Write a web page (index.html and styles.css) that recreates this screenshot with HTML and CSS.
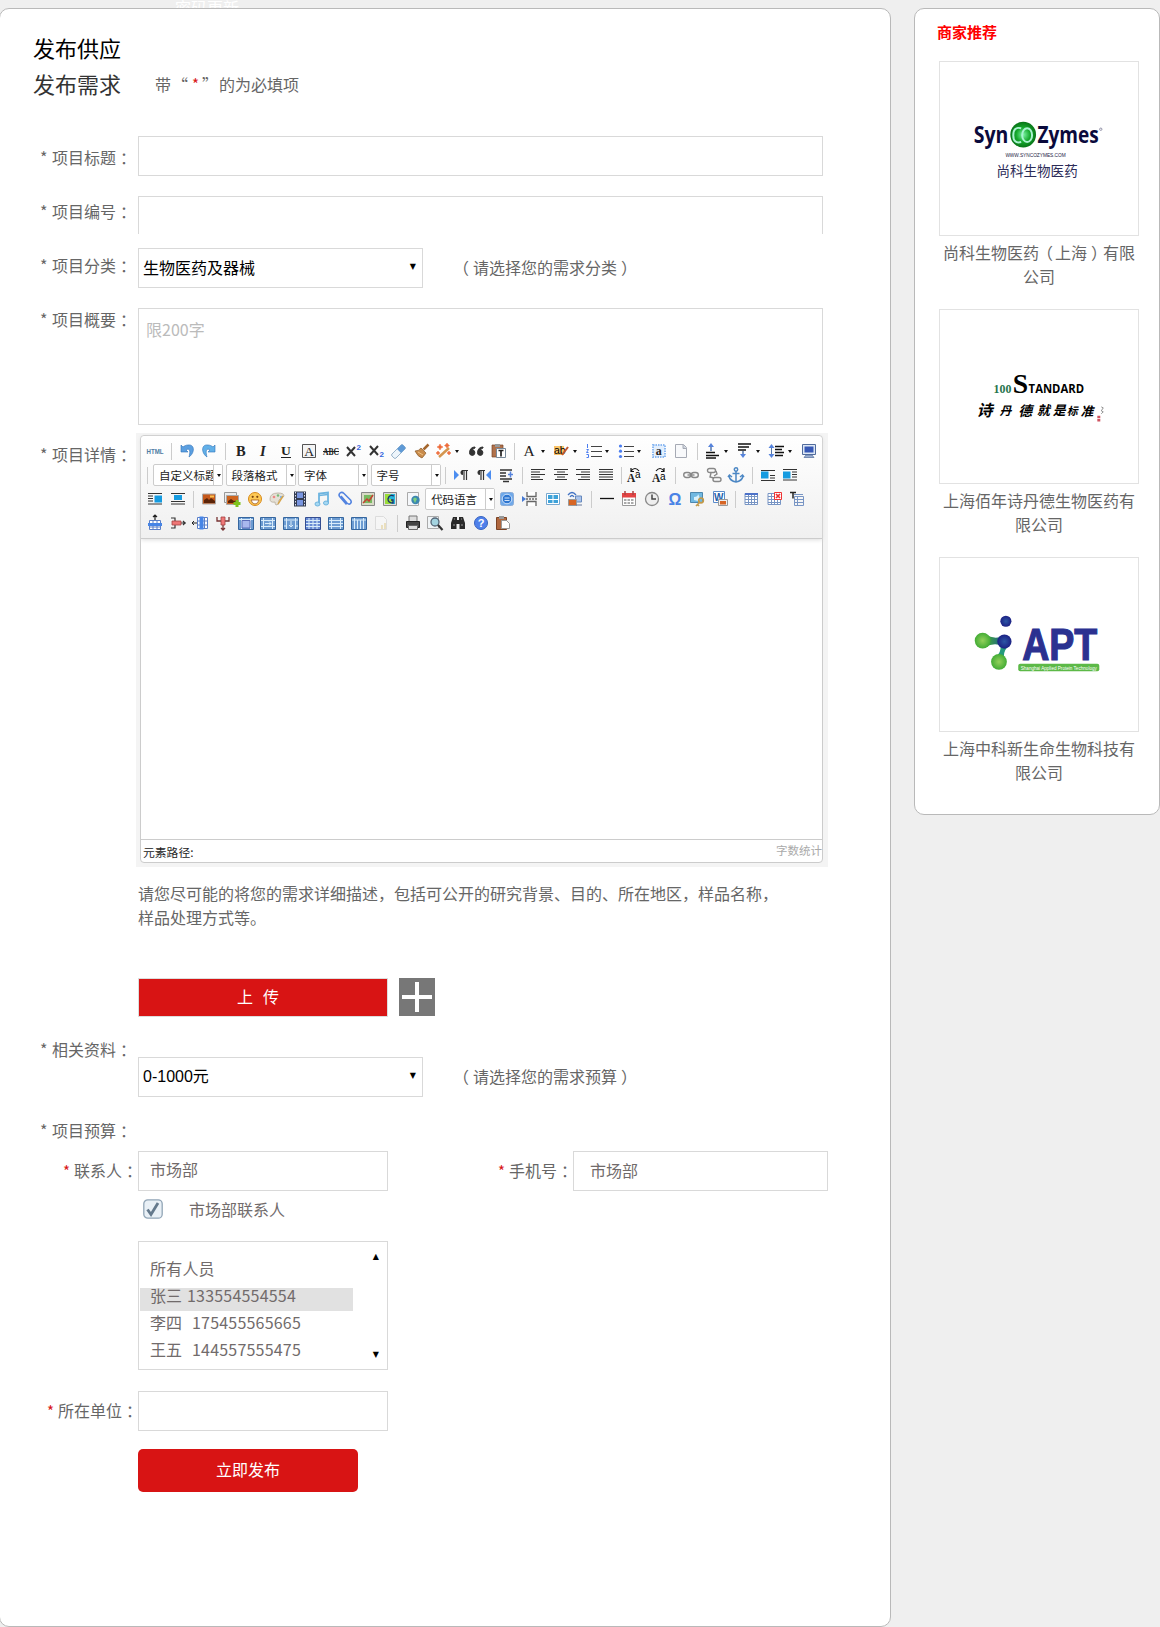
FILE: index.html
```html
<!DOCTYPE html>
<html lang="zh-CN">
<head>
<meta charset="utf-8">
<title>发布需求</title>
<link rel="stylesheet" href="styles.css">
</head>
<body>
<div class="topbar">密码更新</div>
<div class="page">
<main class="panel main">
  <h1 class="title title-supply">发布供应</h1>
  <div class="title-row">
    <h1 class="title">发布需求</h1>
    <p class="required-note">带<span class="quote-l">“</span><b class="star">*</b><span class="quote-r">”</span>的为必填项</p>
  </div>

  <div class="form">
    <div class="labels">
      <label><i>*</i>项目标题<s>：</s></label>
      <label><i>*</i>项目编号<s>：</s></label>
      <label><i>*</i>项目分类<s>：</s></label>
      <label><i>*</i>项目概要<s>：</s></label>
      <label class="l-detail"><i>*</i>项目详情<s>：</s></label>
      <label class="l-files"><i>*</i>相关资料<s>：</s></label>
      <label class="l-budget"><i>*</i>项目预算<s>：</s></label>
    </div>
    <div class="fields">
      <div class="box"></div>
      <div class="box box-open"></div>
      <div class="select-row"><div class="box select">生物医药及器械<span class="down">▼</span></div><span class="hint"><s class="open">（</s>请选择您的需求分类<s>）</s></span></div>
      <div class="box summary">限200字</div>

      <div class="editor">
        <div class="editor-frame">
          <div class="toolbar">
            <div class="tools">
              <span class="tool"><svg viewBox="0 0 16 16"><text x="-.5" y="10.5" font-size="6.5" font-weight="700" fill="#4d7ba3" textLength="17" lengthAdjust="spacingAndGlyphs">HTML</text></svg></span>
              <span class="sep"></span>
              <span class="tool"><svg viewBox="0 0 16 16"><path d="M2 2v7h7L7 7c3-2 5 0 3 7 6-4 6-13-1-12-2 0-4 1-5 2z" fill="#5b9fe0" stroke="#2f72b8" stroke-width=".6"/></svg></span>
              <span class="tool"><svg viewBox="0 0 16 16"><path d="M14 2v7H7l2-2C6 5 4 7 6 14 0 10 0 1 7 2c2 0 4 1 5 2z" fill="#62b0e8" stroke="#2f72b8" stroke-width=".6"/></svg></span>
              <span class="sep"></span>
              <span class="tool"><svg viewBox="0 0 16 16"><text class="serif" x="3" y="13" font-size="14.5" font-weight="700">B</text></svg></span>
              <span class="tool"><svg viewBox="0 0 16 16"><text class="serif" x="4" y="13" font-size="14.5" font-weight="700" font-style="italic">I</text></svg></span>
              <span class="tool"><svg viewBox="0 0 16 16"><text class="serif" x="3" y="12" font-size="13.5" font-weight="700">U</text><path d="M3 14.5h10" stroke="#222"/></svg></span>
              <span class="tool"><svg viewBox="0 0 16 16"><path d="M1.500 1.500h13v13h-13z" fill="#f4f4f4" stroke="#555"/><text class="serif" x="3.200" y="13" font-size="13.500">A</text></svg></span>
              <span class="tool"><svg viewBox="0 0 16 16"><text class="serif" x="0" y="12" font-size="10" font-weight="700" textLength="16" lengthAdjust="spacingAndGlyphs">ABC</text><path d="M0 8.500h16" stroke="#222"/></svg></span>
              <span class="tool"><svg viewBox="0 0 16 16"><path d="M1 4l8 9M9 4l-8 9" stroke="#333" stroke-width="2"/><text x="10.500" y="6.500" font-size="8" font-weight="700" fill="#36d">2</text></svg></span>
              <span class="tool"><svg viewBox="0 0 16 16"><path d="M1 3l8 9M9 3l-8 9" stroke="#333" stroke-width="2"/><text x="10.500" y="14" font-size="8" font-weight="700" fill="#36d">2</text></svg></span>
              <span class="tool"><svg viewBox="0 0 16 16"><path d="M1 11l9-9q1-1 2 0l2 2q1 1 0 2l-9 9q-1 1-2 0l-2-2q-1-1 0-2z" fill="#eef5fb" stroke="#83a2bd" stroke-width=".8"/><path d="M6 6l4-4q1-1 2 0l2 2q1 1 0 2l-4 4z" fill="#5f9ad6"/></svg></span>
              <span class="tool"><svg viewBox="0 0 16 16"><path d="M14.500 1.500l-5 5" stroke="#a5672e" stroke-width="2.500"/><path d="M1 8q4 0 6-3l5 5q-2 3-4 5-4-1-7-7z" fill="#c98b4b" stroke="#8a5a2a" stroke-width=".7"/><path d="M4 9l5 3" stroke="#f0c384"/></svg></span>
              <span class="tool more"><svg viewBox="0 0 16 16"><path d="M3 14l10-9" stroke="#d4964f" stroke-width="2.500"/><path d="M4 1l1 2 2 1-2 1-1 2-1-2-2-1 2-1zM11 0l1 1.500 1.500 1L12 3.500 11 5l-1-1.500-1.500-1 1.500-1zM2 8l.8 1.200L4 10l-1.200.8L2 12l-.8-1.200L0 10l1.200-.8zM13 8l.8 1.200L15 10l-1.200.8L13 12l-.8-1.200L11 10l1.200-.8z" fill="#ee6a38" stroke="#ee6a38" stroke-width=".5"/></svg></span>
              <span class="tool"><svg viewBox="0 0 16 16"><path d="M7 4q-5 0-5.500 5.500A2.700 2.700 0 1 0 4.500 7Q5 5.500 7 5zM15 4q-5 0-5.500 5.500A2.700 2.700 0 1 0 12.500 7Q13 5.500 15 5z" fill="#333" stroke="#333"/></svg></span>
              <span class="tool"><svg viewBox="0 0 16 16"><path d="M1 2h11v12H1z" fill="#b0714b" stroke="#754628" stroke-width=".7"/><path d="M4 1h5v3H4z" fill="#999"/><path d="M5.500 5.500h9v9h-9z" fill="#fff" stroke="#789"/><path d="M7.500 7.500h5M10 7.500v6" stroke="#222" stroke-width="1.700"/></svg></span>
              <span class="sep"></span>
              <span class="tool more"><svg viewBox="0 0 16 16"><text class="serif" x="1.500" y="12.500" font-size="15.500">A</text></svg></span>
              <span class="tool more"><svg viewBox="0 0 16 16"><path d="M0 3h10v9H0z" fill="#f9c368"/><text x="0" y="11" font-size="10.500">ab</text><path d="M8 12l6-8" stroke="#c1562e" stroke-width="2"/></svg></span>
              <span class="tool more"><svg viewBox="0 0 16 16"><path d="M5 3.500h11M5 8.500h11M5 13.500h11" stroke="#444"/><path d="M1.500 1v4M.500 6.500h2l-2 3h2M.500 11.500h2v3h-2" fill="none" stroke="#4b7df0"/></svg></span>
              <span class="tool more"><svg viewBox="0 0 16 16"><path d="M6 3.500h10M6 8.500h10M6 13.500h10" stroke="#444"/><g fill="#4b7df0"><circle cx="2.500" cy="3" r="1.600"/><circle cx="2.500" cy="8.200" r="1.600"/><circle cx="2.500" cy="13.500" r="1.600"/></g></svg></span>
              <span class="tool"><svg viewBox="0 0 16 16"><path d="M2 2h12v12H2z" fill="#e3effd" stroke="#8cb9f2" stroke-width="2" stroke-dasharray="1.500 1"/><text class="serif" x="4.800" y="11.500" font-size="12" font-weight="700">a</text></svg></span>
              <span class="tool"><svg viewBox="0 0 16 16"><path d="M2.500 1.500h8l3 3v10h-11z" fill="#f8f9fb" stroke="#a6aab4"/><path d="M10 1.500v4h3.500" fill="#ccd2dd" stroke="#a6aab4"/></svg></span>
              <span class="sep"></span>
              <span class="tool more"><svg viewBox="0 0 16 16"><path d="M1 9.500h9M1 12.500h13M1 15h10" stroke="#111" stroke-width="1.400"/><path d="M6 8V3" stroke="#57a" stroke-width="1.500"/><path d="M3 4l3-4 3 4z" fill="#5683dc"/></svg></span>
              <span class="tool more"><svg viewBox="0 0 16 16"><path d="M1 1h13M1 4h11M1 7h8" stroke="#111" stroke-width="1.400"/><path d="M6 8v4" stroke="#57a" stroke-width="1.500"/><path d="M3 11l3 4 3-4z" fill="#5683dc"/></svg></span>
              <span class="tool more"><svg viewBox="0 0 16 16"><path d="M6 3.500h9M6 6.500h7M6 9.500h9M6 12.500h8" stroke="#111" stroke-width="1.400"/><path d="M2.500 3v10" stroke="#57a"/><path d="M-.500 5l3-4 3 4zM-.500 11l3 4 3-4z" fill="#5683dc"/></svg></span>
              <span class="tool"><svg viewBox="0 0 16 16"><path d="M1.500 1.500h13v10h-13z" fill="#dde7f5" stroke="#506b9c"/><path d="M3.500 3.500h9v6h-9z" fill="#3658b5"/><path d="M5 12h6l2 2.500H3z" fill="#9cb0d1" stroke="#506b9c" stroke-width=".7"/></svg></span>
            </div>

            <div class="tools">
              <span class="sep lead"></span>
              <span class="combo">自定义标题</span><span class="combo">段落格式</span><span class="combo">字体</span><span class="combo">字号</span>
              <span class="sep gap"></span>
              <span class="tool"><svg viewBox="0 0 16 16"><path d="M1 3v10l5-5z" fill="#4c8df0"/><path d="M11 3v10M13.500 3v10M9 3.500h6" stroke="#333" stroke-width="1.200"/><path d="M10 3a2.500 2.500 0 0 0 0 5z" fill="#333"/></svg></span>
              <span class="tool"><svg viewBox="0 0 16 16"><path d="M15 3v10l-5-5z" fill="#4c8df0"/><path d="M5 3v10M7.500 3v10M3 3.500h6" stroke="#333" stroke-width="1.200"/><path d="M4 3a2.500 2.500 0 0 0 0 5z" fill="#333"/></svg></span>
              <span class="tool"><svg viewBox="0 0 16 16"><path d="M2 3h12M2 6h6M2 9h6M2 12h12M5 14.500h6" stroke="#333" stroke-width="1.300"/><path d="M12.500 4.500v6M10 7.500h5" stroke="#5683dc" stroke-width="1.500"/></svg></span>
              <span class="sep"></span>
              <span class="tool"><svg viewBox="0 0 16 16"><path d="M1 2.500h14M1 5h9M1 7.500h14M1 10h9M1 12.500h12" stroke="#333"/></svg></span>
              <span class="tool"><svg viewBox="0 0 16 16"><path d="M1 2.500h14M4 5h8M1 7.500h14M4 10h8M2 12.500h12" stroke="#333"/></svg></span>
              <span class="tool"><svg viewBox="0 0 16 16"><path d="M1 2.500h14M6 5h9M1 7.500h14M6 10h9M3 12.500h12" stroke="#333"/></svg></span>
              <span class="tool"><svg viewBox="0 0 16 16"><path d="M1 2.500h14M1 5h14M1 7.500h14M1 10h14M1 12.500h14" stroke="#333"/></svg></span>
              <span class="sep"></span>
              <span class="tool case-up"><svg viewBox="0 0 16 16"><text class="serif" x="0" y="14.500" font-size="11.500" font-weight="700">A</text><text x="8" y="11" font-size="10">a</text><path d="M4 4q4-5 8 0M4 1v3.500h3" fill="none" stroke="#111" stroke-width="1.200"/></svg></span>
              <span class="tool case-down"><svg viewBox="0 0 16 16"><text class="serif" x="0" y="14.500" font-size="11.500" font-weight="700">A</text><text x="8" y="13" font-size="10">a</text><path d="M4 4q4-5 8 0M12 1v3.500H9" fill="none" stroke="#111" stroke-width="1.200"/></svg></span>
              <span class="sep after-case"></span>
              <span class="tool"><svg viewBox="0 0 16 16"><g fill="none" stroke="#888" stroke-width="1.400"><rect x=".7" y="5.500" width="7" height="5" rx="2.500"/><rect x="8.300" y="5.500" width="7" height="5" rx="2.500"/><path d="M4.500 8h7"/></g></svg></span>
              <span class="tool"><svg viewBox="0 0 16 16"><g fill="none" stroke="#888" stroke-width="1.400"><rect x="1.500" y="1.500" width="8" height="4" rx="2"/><rect x="7" y="10.500" width="8" height="4" rx="2"/><path d="M5 6l-1 4 4 1M10 4l1 3-3 2"/></g></svg></span>
              <span class="tool"><svg viewBox="0 0 16 16"><g fill="none" stroke="#4c87c4" stroke-width="1.500"><circle cx="8" cy="2.500" r="1.700"/><path d="M8 4v11M4.500 6.500h7M1 9q1 5 7 6 6-1 7-6M0 10l1.500-2L4 10M12 10l2.500-2L16 10"/></g></svg></span>
              <span class="sep"></span>
              <span class="tool"><svg viewBox="0 0 16 16"><path d="M1 3.500h14M10 8.500h5M10 11h5M1 13.500h14" stroke="#333"/><path d="M1 4.500h7.500v7H1z" fill="#159be0"/></svg></span>
              <span class="tool"><svg viewBox="0 0 16 16"><path d="M1 2.500h14M10 5h5M10 7.500h5M10 10h5M1 13h14" stroke="#333"/><path d="M1 4.500h7.500v7H1z" fill="#159be0"/></svg></span>
            </div>

            <div class="tools">
              <span class="tool"><svg viewBox="0 0 16 16"><path d="M1 2.500h14M1 5h5M1 7.500h5M1 10h5M1 13h14" stroke="#333"/><path d="M7.500 4.500H15v7H7.500z" fill="#159be0"/></svg></span>
              <span class="tool"><svg viewBox="0 0 16 16"><path d="M1 2.500h14M1 13h14M1 10.500h14" stroke="#333"/><path d="M4 4h8v5H4z" fill="#159be0"/></svg></span>
              <span class="sep"></span>
              <span class="tool"><svg viewBox="0 0 16 16"><path d="M1.500 3h13v10h-13z" fill="#c5581b" stroke="#aaa"/><path d="M3 9l3-2 2 2 2-2 4 3v2H3z" fill="#5b2408"/><path d="M9 4.500h4v2H9z" fill="#fbc14e"/></svg></span>
              <span class="tool"><svg viewBox="0 0 16 16"><path d="M.500 1.500h12v10h-12z" fill="#eee" stroke="#999"/><path d="M2.500 4.500h12v9h-12z" fill="#cf651f" stroke="#aaa"/><path d="M4 10l3-2 3 2 3-1v3H4z" fill="#5b2408"/><path d="M13 9v7M9.500 12.500h7" stroke="#7ec21c" stroke-width="3"/></svg></span>
              <span class="tool"><svg viewBox="0 0 16 16"><circle cx="8" cy="8" r="6.500" fill="#fdc955" stroke="#d98a1a"/><path d="M4 9h8q-1 4-4 4T4 9z" fill="#fff" stroke="#a3591a" stroke-width=".8"/><circle cx="5.700" cy="5.800" r="1.100" fill="#7b430f"/><circle cx="10.300" cy="5.800" r="1.100" fill="#7b430f"/></svg></span>
              <span class="tool"><svg viewBox="0 0 16 16"><path d="M1 8q0-6 8-6 6 0 6 3-1 2-4 3-2 1-1 3 0 3-3 3-1-1-1-3-5 1-5-3z" fill="#e5e0d5" stroke="#b5ab99" stroke-width=".8"/><circle cx="5" cy="6" r="1.300" fill="#e88"/><circle cx="9" cy="4.500" r="1.200" fill="#7b7"/><circle cx="12" cy="6" r="1" fill="#6ae"/><path d="M14 5l-5 8" stroke="#d6a44a" stroke-width="1.500"/></svg></span>
              <span class="tool"><svg viewBox="0 0 16 16"><path d="M2 .500h12v15H2z" fill="#333c52"/><path d="M5 1.500h6v5.500H5zM5 9h6v5.500H5z" fill="#7895e0"/><path d="M3.500 1v14M12.500 1v14" stroke="#dde" stroke-dasharray="1.500 1.500"/></svg></span>
              <span class="tool"><svg viewBox="0 0 16 16"><path d="M5 13V2.500l9-1V12" fill="none" stroke="#6db4df" stroke-width="1.800"/><path d="M5 4.500l9-1" stroke="#6db4df" stroke-width="1.500"/><ellipse cx="3.500" cy="13" rx="2.500" ry="2" fill="#a6d8f2" stroke="#6db4df"/><ellipse cx="12" cy="12" rx="2.500" ry="2" fill="#a6d8f2" stroke="#6db4df"/></svg></span>
              <span class="tool"><svg viewBox="0 0 16 16"><path d="M4 5l6 7q2 2 3.500.500 1.500-1.500 0-3.500L7 2.500Q5 .500 3 2 1 4 3 6l6.500 7.500" fill="none" stroke="#5283e0" stroke-width="1.500"/></svg></span>
              <span class="tool"><svg viewBox="0 0 16 16"><path d="M1.500 1.500h13v13h-13z" fill="#d8dbc6" stroke="#888"/><path d="M4 4h8v8H4z" fill="#78ba61"/><path d="M3 12l4-4 2 2 4-6" fill="none" stroke="#c53f30" stroke-width="1.500"/></svg></span>
              <span class="tool"><svg viewBox="0 0 16 16"><path d="M1.500 1.500h13v13h-13z" fill="#ddd" stroke="#888"/><path d="M3 3h10v10H3z" fill="#26b6dc"/><path d="M3 3h6L6 7l5 2-2 4H3z" fill="#9add38"/><path d="M12 5q-5-2-6 3 0 4 5 4V9H9" fill="none" stroke="#236" stroke-width="1.300"/></svg></span>
              <span class="tool"><svg viewBox="0 0 16 16"><path d="M2.500 1.500h11v13h-11z" fill="#f5f7fa" stroke="#aaa"/><circle cx="10.500" cy="9" r="4.200" fill="#3c87b0"/><path d="M8 8q2-3 4 0l-2 4z" fill="#7bd080"/></svg></span>
              <span class="combo code">代码语言</span>
              <span class="tool"><svg viewBox="0 0 16 16"><rect x="1.500" y="1.500" width="13" height="13" rx="2" fill="#6fa9ea" stroke="#8bacd7"/><circle cx="8" cy="8" r="4.800" fill="#2e76d0" stroke="#cfe2fa"/><path d="M5.500 7h5M5.500 9.500h5" stroke="#cfe2fa"/></svg></span>
              <span class="tool"><svg viewBox="0 0 16 16"><path d="M5 1v4.500h9V1M5 15v-4.500h9V15" fill="#fff" stroke="#666" stroke-width="1.300"/><path d="M4 8h11" stroke="#222" stroke-dasharray="2 1"/><path d="M0 5l4 3-4 3z" fill="#467ad4"/></svg></span>
              <span class="tool"><svg viewBox="0 0 16 16"><path d="M1.500 2.500h13v11h-13z" fill="#fff" stroke="#78a8cf"/><path d="M3 4h4.500v4H3zM8.500 4H13v4H8.500zM3 9h4.500v3H3zM8.500 9H13v3H8.500z" fill="#3da2d9"/></svg></span>
              <span class="tool"><svg viewBox="0 0 16 16"><path d="M1 4q4-5 8 0M3 6q2-3 4 0" fill="none" stroke="#4273c4" stroke-width="1.300"/><path d="M8.500 5h6v6h-6z" fill="#abc5ed" stroke="#6789bd"/><path d="M1.500 8.500h8v6h-8z" fill="#d76524" stroke="#999"/><path d="M9 14h6" stroke="#679"/></svg></span>
              <span class="sep"></span>
              <span class="tool"><svg viewBox="0 0 16 16"><path d="M1 7.500h14" stroke="#111" stroke-width="1.300"/></svg></span>
              <span class="tool"><svg viewBox="0 0 16 16"><path d="M1.500 2.500h13v12h-13z" fill="#fff" stroke="#9a9a9a"/><path d="M1 2h14v4.500H1z" fill="#e34444"/><path d="M4 0v4M12 0v4" stroke="#a44" stroke-width="1.500"/><path d="M3 9h10M3 12h10" stroke="#aaa" stroke-width="2" stroke-dasharray="2.500 1"/></svg></span>
              <span class="tool"><svg viewBox="0 0 16 16"><circle cx="8" cy="8" r="6.500" fill="#eee" stroke="#888" stroke-width="1.300"/><path d="M8 3.500V8h4" fill="none" stroke="#444" stroke-width="1.500"/></svg></span>
              <span class="tool"><svg viewBox="0 0 16 16"><text x="1.500" y="13.500" font-size="16" font-weight="700" fill="#4a83e6">Ω</text></svg></span>
              <span class="tool"><svg viewBox="0 0 16 16"><path d="M1.500 1.500h12v10h-12z" fill="#70b8e1" stroke="#4e88ae"/><path d="M5 9V6q4 0 4-3 3 4 0 7z" fill="#d8f0fb"/><circle cx="12" cy="9.500" r="2.300" fill="none" stroke="#c39a4a" stroke-width="1.700"/><path d="M11 11l-4 4M8 13l2 2" stroke="#c39a4a" stroke-width="1.700"/></svg></span>
              <span class="tool"><svg viewBox="0 0 16 16"><path d="M1.500.500h11v11h-11z" fill="#fff" stroke="#5b8ccb"/><text x="2" y="9.500" font-size="10" font-weight="700" fill="#235dab">W</text><path d="M6.500 8.500h9v6h-9z" fill="#eee" stroke="#999"/><path d="M8 10h6v3.500H8z" fill="#d76524"/></svg></span>
              <span class="sep"></span>
              <span class="tool"><svg viewBox="0 0 16 16"><path d="M2 2.500h12.500v11H2z" fill="#fff" stroke="#7895c4"/><path d="M2 5.500h12.500M2 8.500h12.500M2 11.500h12.500M5.500 3v10M8.500 3v10M11.500 3v10" stroke="#7895c4"/><path d="M2 2h13v2H2z" fill="#4d72c9"/></svg></span>
              <span class="tool"><svg viewBox="0 0 16 16"><path d="M2 2.500h12.500v11H2z" fill="#fff" stroke="#7895c4"/><path d="M2 5.500h12.500M2 8.500h12.500M2 11.500h12.500M5.500 3v10M8.500 3v10M11.500 3v10" stroke="#7895c4"/><path d="M8.500 1.500h7v7h-7z" fill="#fff" stroke="#e33"/><path d="M10 3l4 4M14 3l-4 4" stroke="#e33" stroke-width="1.700"/></svg></span>
              <span class="tool"><svg viewBox="0 0 16 16"><path d="M1 1.500h6M4 1.500v6" stroke="#222" stroke-width="1.500"/><path d="M5.500 5.500h9v9h-9zM5.500 8.500H15M5.500 11.500H15M8.500 5v9M5 3.500h9" fill="none" stroke="#7895c4"/></svg></span>
            </div>

            <div class="tools">
              <span class="tool"><svg viewBox="0 0 16 16"><path d="M2.500 5.500h11v9h-11zM2.500 12H14M6 5v9M10 5v9" fill="#fff" stroke="#5b7fc7"/><path d="M1 8h14v3H1z" fill="#4785e6"/><path d="M8 0v5M6 2l2-2 2 2" fill="none" stroke="#222" stroke-width="1.200"/></svg></span>
              <span class="tool"><svg viewBox="0 0 16 16"><path d="M1 3h4v3M1 13h4v-3M10 8h6M13 6l2 2-2 2" fill="none" stroke="#333" stroke-width="1.200"/><path d="M2 6h9v4H2z" fill="#ef7777" stroke="#a34343" stroke-width=".8"/></svg></span>
              <span class="tool"><svg viewBox="0 0 16 16"><path d="M5.500 2.500h10v11h-10zM5.500 6H16M5.500 10H16M12.500 2v11" fill="#fff" stroke="#5b7fc7"/><path d="M7.500 1.500h4v13h-4z" fill="#4785e6"/><path d="M0 8h5M2 6L0 8l2 2" fill="none" stroke="#222"/></svg></span>
              <span class="tool"><svg viewBox="0 0 16 16"><path d="M2 2v4h4M14 2v4h-4M8 9v6M6 13l2 2 2-2" fill="none" stroke="#733" stroke-width="1.300"/><path d="M6 2h4v8H6z" fill="#ef7777" stroke="#a34343" stroke-width=".8"/></svg></span>
              <span class="tool"><svg class="cells first" viewBox="0 0 16 16"><path d="M.500 2.500h15v12H.500z"/><path d="M1 4.500h14M3.500 3v11M12.500 3v11" class="grid"/><path d="M4 5.500h8v7.500H4z" class="light"/></svg></span>
              <span class="tool"><svg class="cells" viewBox="0 0 16 16"><path d="M.500 2.500h15v12H.500z"/><path d="M1 5.500h14M1 11.500h14M3.500 3v11M12.500 3v11" class="grid"/><path d="M5 8.500h6M9 6.500l2 2-2 2" class="grid"/></svg></span>
              <span class="tool"><svg class="cells" viewBox="0 0 16 16"><path d="M.500 2.500h15v12H.500z"/><path d="M1 5h14M3.500 3v11M12.500 3v11M1 11h3M12 11h3" class="grid"/><path d="M8 6v6M6 10l2 2 2-2" class="grid"/></svg></span>
              <span class="tool"><svg class="cells deep" viewBox="0 0 16 16"><path d="M.500 2.500h15v12H.500z"/><path d="M1 5.500h14M1 8.500h14M1 11.500h14M4 3v11M8 3v11M12 3v11" class="grid"/></svg></span>
              <span class="tool"><svg class="cells" viewBox="0 0 16 16"><path d="M.500 2.500h15v12H.500z"/><path d="M1 5.500h14M1 8.500h14M1 11.500h14M3.500 3v11M12.500 3v11" class="grid"/></svg></span>
              <span class="tool"><svg class="cells" viewBox="0 0 16 16"><path d="M.500 2.500h15v12H.500z"/><path d="M1 5h14M3.500 3v11M6.500 5v9M9.500 5v9M12.500 3v11" class="grid"/></svg></span>
              <span class="tool faded"><svg viewBox="0 0 16 16"><path d="M2.500 1.500h8l3 3v10h-11z" fill="#fff" stroke="#aaa"/><path d="M8 14v-4h2v4zM11 14V8h2v6z" fill="#d9b64a"/></svg></span>
              <span class="sep"></span>
              <span class="tool"><svg viewBox="0 0 16 16"><path d="M4 1h8v6H4z" fill="#ddd" stroke="#777"/><path d="M1.500 6.500h13v6h-13z" fill="#444" stroke="#222"/><path d="M3.500 10.500h9v4h-9z" fill="#ddd" stroke="#666"/></svg></span>
              <span class="tool"><svg viewBox="0 0 16 16"><path d="M.500 1.500h11v12H.500z" fill="#f0f4f6" stroke="#aaa"/><circle cx="8" cy="7" r="4" fill="#a4d4e0" stroke="#567" stroke-width="1.300"/><path d="M11 10l4.500 5" stroke="#333" stroke-width="2.200"/></svg></span>
              <span class="tool"><svg viewBox="0 0 16 16"><path d="M3 2h4v3h2V2h4l2 6v6H9.500V9h-3v5H1V8z" fill="#2a2a2a"/><path d="M3 10h2M11 10h2M4 4h1M11 4h1" stroke="#999"/></svg></span>
              <span class="tool"><svg viewBox="0 0 16 16"><circle cx="8" cy="8" r="6.500" fill="#4f80ea" stroke="#3763c0"/><text x="4.800" y="12" font-size="11" font-weight="700" fill="#fff">?</text></svg></span>
              <span class="tool"><svg viewBox="0 0 16 16"><path d="M1.500 2.500h10v12h-10z" fill="#b0673e" stroke="#7b4325"/><path d="M4 1h5v3H4z" fill="#999"/><path d="M6.500 5.500h5l3 3v5h-8z" fill="#fff" stroke="#999"/></svg></span>
            </div>
          </div>
          <div class="canvas"></div>
          <div class="status"><span>元素路径:</span><span class="count">字数统计</span></div>
        </div>
      </div>

      <p class="tip">请您尽可能的将您的需求详细描述，包括可公开的研究背景、目的、所在地区，样品名称，样品处理方式等。</p>
      <div class="upload-row">
        <button class="upload"><span>上</span><span>传</span></button>
        <svg class="plus" viewBox="0 0 36 38"><path d="M0 0h36v38H0z" fill="#777"/><path d="M3 19h30M18 4v30" stroke="#fff" stroke-width="4"/></svg>
      </div>
      <div class="select-row budget"><div class="box select"><span><span class="arial">0-1000</span>元</span><span class="down">▼</span></div><span class="hint"><s class="open">（</s>请选择您的需求预算<s>）</s></span></div>
    </div>
  </div>

  <div class="contact">
    <label class="req"><b class="star">*</b>联系人<s>：</s></label>
    <div class="box small name">市场部</div>
    <label class="req phone-label"><b class="star">*</b>手机号<s>：</s></label>
    <div class="box phone">市场部</div>
  </div>
  <div class="check-row">
    <svg class="check" viewBox="0 0 20 20"><rect x=".8" y=".8" width="18.400" height="18.400" rx="4" fill="#e9f0f6" stroke="#91a5b6" stroke-width="1.300"/><path d="M4.500 10.500l3.500 5L15 4" fill="none" stroke="#64798c" stroke-width="2.800"/></svg>
    <span>市场部联系人</span>
  </div>
  <div class="box people">
    <ul>
      <li>所有人员</li>
      <li class="selected"><span>张三</span>133554554554</li>
      <li class="spaced"><span>李四</span>175455565665</li>
      <li class="spaced"><span>王五</span>144557555475</li>
    </ul>
    <div class="scroll"><span>▲</span><span>▼</span></div>
  </div>
  <div class="contact unit">
    <label class="req"><b class="star">*</b>所在单位<s>：</s></label>
    <div class="box small"></div>
  </div>
  <button class="submit">立即发布</button>
</main>

<aside class="panel side">
  <h2>商家推荐</h2>
  <div class="merchant">
    <svg class="logo" viewBox="0 0 200 175">
      <defs><radialGradient id="ball"><stop offset="0" stop-color="#7df5a5"/><stop offset=".55" stop-color="#15a82c"/><stop offset="1" stop-color="#087518"/></radialGradient></defs>
      <g class="humanist" fill="#0a0a3c" font-weight="700" font-size="24"><text x="34" y="82" textLength="35" lengthAdjust="spacingAndGlyphs">Syn</text><text x="98.500" y="82" textLength="62" lengthAdjust="spacingAndGlyphs">Zymes</text></g>
      <circle cx="84" cy="73.500" r="13" fill="url(#ball)"/>
      <g fill="none" stroke="#a9f3d0" stroke-width="2"><path d="M82 67q-8-2-8 7t8 7"/><ellipse cx="88" cy="74" rx="5" ry="7"/></g>
      <circle cx="162.500" cy="68" r="1.200" fill="none" stroke="#557" stroke-width=".6"/>
      <text x="66" y="96.500" font-size="5.500" fill="#224" textLength="61" lengthAdjust="spacingAndGlyphs">WWW.SYNCOZYMES.COM</text>
      <text x="57" y="115" font-size="13.700" fill="#2c2c58" class="cjk">尚科生物医药</text>
    </svg>
    <p>尚科生物医药<s class="open">（</s>上海<s>）</s>有限公司</p>
  </div>
  <div class="merchant">
    <svg class="logo" viewBox="0 0 200 175">
      <text class="serif-logo" x="54" y="84" font-size="13" font-weight="700" fill="#27744d" textLength="18" lengthAdjust="spacingAndGlyphs">100</text>
      <text class="serif-logo" x="73.500" y="84" font-size="28" font-weight="700">S</text>
      <text class="humanist" x="89.500" y="84" font-size="12.500" font-weight="700" textLength="56" lengthAdjust="spacingAndGlyphs">TANDARD</text>
      <g class="brush"><text x="37" y="107" font-size="16">诗</text><text x="60" y="106" font-size="12">丹</text><text x="79" y="107" font-size="14">德</text><text x="98" y="106" font-size="13">就</text><text x="114" y="106" font-size="13">是</text><text x="128" y="106" font-size="11">标</text><text x="142" y="107" font-size="13">准</text></g>
      <path d="M163 98l2 1-2 3 2 1-2 2" fill="none" stroke="#777" stroke-width=".8"/><path d="M160.500 107v6" stroke="#ce5360" stroke-width="3" stroke-dasharray="2.500 .8"/>
    </svg>
    <p>上海佰年诗丹德生物医药有限公司</p>
  </div>
  <div class="merchant">
    <svg class="logo" viewBox="0 0 200 175">
      <defs><radialGradient id="green"><stop offset="0" stop-color="#93d15b"/><stop offset="1" stop-color="#43ac35"/></radialGradient><radialGradient id="blue"><stop offset="0" stop-color="#2c57a5"/><stop offset="1" stop-color="#1c2184"/></radialGradient>
      <linearGradient id="arm"><stop offset="0" stop-color="#43ac35"/><stop offset="1" stop-color="#1b5b90"/></linearGradient></defs>
      <path d="M46 77q8 6 18 2v10q-10-4-18 1z" fill="url(#arm)"/><path d="M61 88q1 8-5 12l9 3q-2-7 3-13z" fill="#249a7c"/>
      <circle cx="43" cy="83.500" r="8" fill="url(#green)"/><circle cx="59.500" cy="105" r="8" fill="url(#green)"/><circle cx="65" cy="84.500" r="7.200" fill="url(#blue)"/><circle cx="66.500" cy="64" r="5.600" fill="url(#blue)"/>
      <text x="83" y="103.500" font-size="44" font-weight="700" fill="#2b3190" stroke="#2b3190" stroke-width="1.200" textLength="76" lengthAdjust="spacingAndGlyphs">APT</text>
      <rect x="79" y="107" width="82" height="7.500" rx="2" fill="#5cb947"/><text x="81.500" y="112.800" font-size="5.500" fill="#fff" textLength="77" lengthAdjust="spacingAndGlyphs">Shanghai Applied Protein Technology</text>
    </svg>
    <p>上海中科新生命生物科技有限公司</p>
  </div>
</aside>
</div>
</body>
</html>
```
FILE: styles.css
```css
* { box-sizing: border-box; }
body {
  margin: 0;
  height: 1627px;
  overflow: hidden;
  background: #efefef;
  color: #666;
  font: 16px/24px "Noto Sans CJK SC", "Liberation Sans", sans-serif;
}
h1, h2, p, ul { margin: 0; padding: 0; }
/* Full-width punctuation, nudged towards the middle of its cell */
s { display: inline-block; width: 16px; text-indent: 4px; text-decoration: none; white-space: nowrap; }
s.open { text-indent: -4px; }
.topbar {
  height: 8px;
  padding-left: 175px;
  overflow: hidden;
  color: #fff;
  line-height: 14px;
}
.page { display: flex; align-items: flex-start; gap: 23px; }
.panel { background: #fff; border: 1px solid #b9b9b9; border-radius: 10px; }
.main { flex: none; width: 892px; height: 1619px; margin-left: -1px; padding: 20px 0 0 33px; }

.title { font-size: 22px; line-height: 36px; font-weight: 400; color: #333; }
.title-supply { color: #000; }
.title-row { display: flex; gap: 34px; height: 36px; }
.required-note { display: flex; padding-top: 1px; line-height: 36px; }
.star { color: #d81515; font-weight: 400; font-size: 15px; }
.quote-l { width: 21px; text-align: right; padding-right: 4px; }
.quote-r { width: 20px; padding-left: 3px; }

.form { display: grid; grid-template-columns: 98px 692px; margin: 35px 0 0 7px; height: 1015px; }
.labels { display: flex; flex-direction: column; gap: 30px; padding-top: 9px; }
.labels label { height: 24px; white-space: nowrap; }
.labels i { display: inline-block; width: 12px; font-style: normal; }
.labels .l-detail { margin-top: 81px; }
.labels .l-files { margin-top: 541px; }
.labels .l-budget { margin-top: 27px; }

.box { width: 685px; height: 40px; border: 1px solid #d9d9d9; background: #fff; }
.box-open { height: 38px; margin-top: 20px; border-bottom: 0; }
.select-row { display: flex; align-items: center; margin-top: 14px; }
.select { display: flex; justify-content: space-between; align-items: center; width: 285px; padding: 0 6px 2px 4px; color: #000; }
.down { font: 8px/1 "DejaVu Sans", sans-serif; color: #000; }
.arial { font-family: "Liberation Sans", sans-serif; }
.hint { margin-left: 34px; padding-bottom: 2px; }
.summary { height: 117px; margin-top: 20px; padding: 8px 7px; color: #bbb; }

.editor { width: 692px; height: 434px; margin: 8px 0 0 -2px; padding: 2px 5px 4px 4px; background: #f4f4f4; }
.editor-frame { height: 428px; border: 1px solid #ccc; border-radius: 4px; background: #fff; display: flex; flex-direction: column; }
.toolbar { height: 103px; padding: 3px 0 0 3px; border-bottom: 1px solid #ccc; border-radius: 4px 4px 0 0; background: linear-gradient(#fff, #f0f0f0); box-shadow: 0 1px 4px #ddd; }
.tools { display: flex; align-items: center; height: 24.100px; }
.tool { flex: none; display: flex; align-items: center; justify-content: center; width: 22.600px; }
.tool svg { flex: none; width: 16px; height: 16px; overflow: visible; }
.tool text { font-family: "Liberation Sans", sans-serif; }
.tool text.serif { font-family: "Liberation Serif", serif; fill: #222; }
.more { width: 32px; justify-content: flex-start; padding-left: 3px; gap: 3px; }
.more::after { content: ""; border: 2.500px solid transparent; border-top: 3px solid #111; border-bottom: 0; }
.case-up { margin-left: -2px; }
.case-down { width: 27px; }
.faded { opacity: .3; }
.sep { flex: none; width: 5px; height: 17px; margin-left: 4px; border-left: 1px solid #ccc; }
.after-case.sep { margin-left: 1px; }
.lead.sep { margin-left: 3px; width: 6px; }
.gap.sep { margin-left: 2px; }
.cells { fill: #6d9cd2; stroke: #35669f; }
.cells.deep { fill: #688ad4; stroke: #334d91; }
.cells .light { fill: #a9b8ee; stroke: #5c6cb8; }
.cells .grid { fill: none; stroke: #d9ecfa; }
.combo {
  flex: none;
  position: relative;
  width: 70px;
  height: 22px;
  margin-right: 2.500px;
  padding-left: 5px;
  border: 1px solid #ccc;
  border-radius: 2px;
  background: #fff;
  font-size: 11.500px;
  line-height: 20px;
  color: #222;
  white-space: nowrap;
}
.combo::before { content: ""; position: absolute; right: 0; top: 0; width: 8px; height: 20px; border-left: 1px solid #ccc; background: #fff; }
.combo::after { content: ""; position: absolute; right: 1px; top: 9px; border: 2.500px solid transparent; border-top: 3px solid #111; border-bottom: 0; }
.code { margin-left: 1px; margin-right: 1px; }
.canvas { flex: 1; }
.status { display: flex; justify-content: space-between; height: 23px; padding-left: 2px; border-top: 1px solid #ccc; font-size: 11.800px; line-height: 23px; color: #222; }
.count { color: #aaa; line-height: 20px; font-size: 11.500px; }

.tip { width: 645px; margin-top: 14px; }
.upload-row { display: flex; gap: 11px; margin-top: 49px; }
.upload { display: flex; justify-content: center; align-items: center; gap: 10px; width: 250px; height: 39px; padding: 0 10px 4px 0; border: 1px solid #ddd; background: #d81414; color: #fff; font: inherit; }
.plus { width: 36px; height: 38px; }
.budget { margin-top: 40px; }

.contact { display: flex; align-items: center; height: 40px; }
.req { width: 105px; padding: 0 0 1px; text-align: right; white-space: nowrap; }
.req .star { margin-right: 4px; }
.small { width: 250px; }
.name { padding: 5px 11px; }
.phone-label { width: 185px; }
.phone { width: 255px; padding: 6px 16px; }
.name, .phone, .people, .check-row { color: #716b6b; }
.check-row { display: flex; align-items: center; gap: 26px; height: 38px; margin: -1px 0 13px 110px; }
.check { width: 20px; height: 20px; }
.people { display: flex; justify-content: space-between; width: 250px; height: 129px; margin-left: 105px; padding: 15px 8px 0 1px; }
.people ul { width: 213px; list-style: none; }
.people li { height: 23px; margin-bottom: 4px; padding-left: 10px; line-height: 21px; letter-spacing: .200px; }
.people li span { margin-right: 5px; letter-spacing: 0; }
.people .spaced span { margin-right: 10px; }
.people .selected { background: #e1e1e1; margin-top: 8px; line-height: 15px; margin-bottom: 1px; }
.people li:first-child { margin-bottom: 0; line-height: 22px; }
.scroll { display: flex; flex-direction: column; justify-content: space-between; height: 109px; margin-top: -6px; padding: 1px 0 0; font: 8px/10px "DejaVu Sans", sans-serif; color: #000; }
.unit { margin-top: 21px; }
.submit { display: block; width: 220px; height: 43px; margin: 18px 0 0 105px; padding: 0 0 3px; border: 0; border-radius: 5px; background: #d81414; color: #fff; font: inherit; }

.side { flex: none; width: 246px; height: 807px; padding: 11px 0 0 24px; }
.side h2 { margin-left: -2px; font-size: 15px; line-height: 24px; font-weight: 700; color: #f00; }
.merchant { width: 200px; height: 248px; }
.side h2 + .merchant { margin-top: 17px; }
.logo { display: block; width: 200px; height: 175px; border: 1px solid #e2e2e2; font-family: "Liberation Sans", sans-serif; }
.merchant p { margin-top: 4px; padding: 0 3px; text-align: center; }
.humanist { font-family: "Open Sans", "Noto Sans", sans-serif; }
.cjk { font-family: "Noto Sans CJK SC", sans-serif; }
.serif-logo { font-family: "Liberation Serif", serif; }
.brush { font-family: "Noto Sans CJK SC", sans-serif; font-weight: 700; font-style: italic; }
```
